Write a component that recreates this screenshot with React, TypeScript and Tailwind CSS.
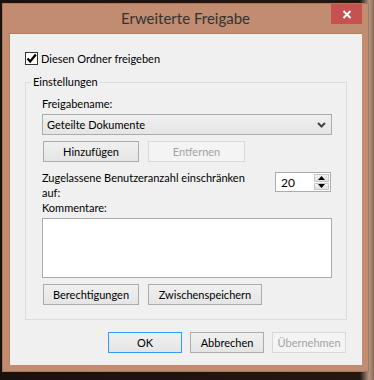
const ui = "font-['Segoe_UI',Lato,'Liberation_Sans',sans-serif] text-[11px] leading-[15px] text-black";

function Button({ label, w, disabled, primary }: { label: string; w: string; disabled?: boolean; primary?: boolean }) {
  const border = primary ? "border-[#3399ff]" : disabled ? "border-[#d9d9d9]" : "border-[#acacac]";
  const fill = disabled ? "bg-[#f4f4f4] text-[#a3a3a3]" : "bg-[linear-gradient(#f0f0f0,#e5e5e5)] text-black";
  return (
    <div className={`${w} h-[21px] border ${border} ${fill} flex items-center justify-center`}>
      {label}
    </div>
  );
}

export default function App() {
  return (
    <div className={`w-[374px] h-[380px] overflow-hidden pt-[3px] pl-[2px] bg-[linear-gradient(to_right,#1b110c_0px,#24170f_360px,#b59686_369px,#8c6a55_374px)] ${ui}`}>
      <div className="w-[367px] h-[369px] bg-[#c18c70] border border-[#a9795f] px-[6px] flex flex-col">
        {/* title bar */}
        <div className="h-[29px] relative flex items-center justify-center">
          <span className="text-[15px] text-[#333] -mt-[1px]">Erweiterte Freigabe</span>
          <div className="absolute right-0 top-0 w-[31px] h-[20px] bg-[#c75050] flex items-center justify-center">
            <svg width="10" height="9" viewBox="0 0 10 9">
              <path d="M1.5 1 L8.5 8 M8.5 1 L1.5 8" stroke="#fff" strokeWidth="2" />
            </svg>
          </div>
        </div>

        {/* client area */}
        <div className="w-[353px] h-[332px] bg-[#f0f0f0] border border-[#b08065] border-r-0 border-b-0 flex flex-col pl-[15px] pr-[15px]">
          <div className="mt-[16px] h-[16px] flex items-center gap-[3px]">
            <div className="w-[13px] h-[13px] border border-[#333] bg-white flex items-center justify-center">
              <svg width="11" height="11" viewBox="0 0 11 11">
                <path d="M1.5 5.5 L4.2 8.5 L9.8 1.5" fill="none" stroke="#000" strokeWidth="2.2" />
              </svg>
            </div>
            <span>Diesen Ordner freigeben</span>
          </div>

          <fieldset className="mt-[8px] border border-[#dcdcdc] px-[5px] pb-[14px]">
            <legend className="px-[2px] leading-[16px]">Einstellungen</legend>
            <div className="pl-[11px] pr-[9px] flex flex-col">
              <div className="mt-[6px]">Freigabename:</div>
              <div className="mt-[3px] h-[21px] border border-[#acacac] bg-[linear-gradient(#f0f0f0,#e5e5e5)] flex items-center justify-between pl-[4px] pr-[5px]">
                <span>Geteilte Dokumente</span>
                <svg width="9" height="6" viewBox="0 0 9 6">
                  <path d="M1 1 L4.5 4.5 L8 1" fill="none" stroke="#444" strokeWidth="2" />
                </svg>
              </div>
              <div className="mt-[6px] ml-px flex gap-[9px]">
                <Button label="Hinzufügen" w="w-[96px]" />
                <Button label="Entfernen" w="w-[97px]" disabled />
              </div>
              <div className="mt-[8px] flex justify-between items-start">
                <div className="w-[212px]">Zugelassene Benutzeranzahl einschränken auf:</div>
                <div className="mt-[2px] mr-px w-[56px] h-[20px] border border-[#acacac] bg-white flex">
                  <span className="flex-1 pl-[5px] flex items-center text-[12px]">20</span>
                  <div className="w-[16px] flex flex-col py-px pr-px gap-px">
                    <div className="flex-1 border border-[#c9c9c9] bg-[linear-gradient(#f2f2f2,#e0e0e0)] flex items-center justify-center">
                      <svg width="7" height="4" viewBox="0 0 7 4"><path d="M0 4 L3.5 0 L7 4Z" fill="#000" /></svg>
                    </div>
                    <div className="flex-1 border border-[#c9c9c9] bg-[linear-gradient(#f2f2f2,#e0e0e0)] flex items-center justify-center">
                      <svg width="7" height="4" viewBox="0 0 7 4"><path d="M0 0 L3.5 4 L7 0Z" fill="#000" /></svg>
                    </div>
                  </div>
                </div>
              </div>
              <div>Kommentare:</div>
              <div className="mt-[3px] h-[60px] border border-[#acacac] bg-white" />
              <div className="mt-[6px] ml-px flex gap-[9px]">
                <Button label="Berechtigungen" w="w-[96px]" />
                <Button label="Zwischenspeichern" w="w-[114px]" />
              </div>
            </div>
          </fieldset>

          <div className="mt-[12px] mr-px flex justify-end gap-[8px]">
            <Button label="OK" w="w-[74px]" primary />
            <Button label="Abbrechen" w="w-[74px]" />
            <Button label="Übernehmen" w="w-[74px]" disabled />
          </div>
        </div>
      </div>
    </div>
  );
}
